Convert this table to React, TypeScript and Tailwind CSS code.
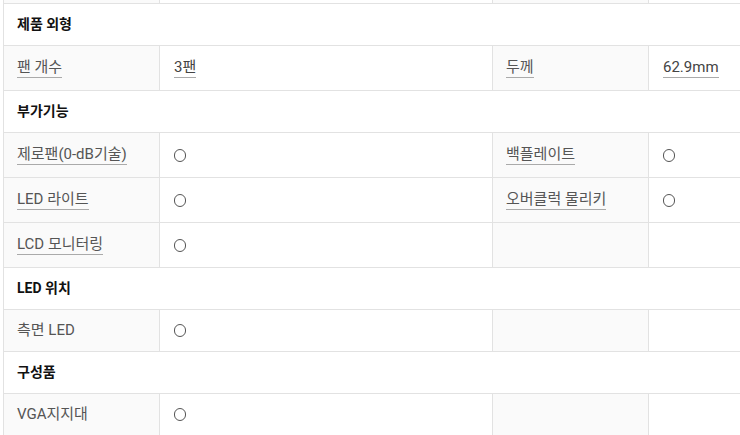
import React from "react";

type Cell = { label?: string; value?: string; circle?: boolean; underline?: boolean };
type Row =
  | { kind: "title"; text: string }
  | { kind: "data"; left: Cell; right: Cell; h: string };

const rows: Row[] = [
  { kind: "title", text: "제품 외형" },
  { kind: "data", h: "h-[45px]", left: { label: "팬 개수", value: "3팬", underline: true }, right: { label: "두께", value: "62.9mm", underline: true } },
  { kind: "title", text: "부가기능" },
  { kind: "data", h: "h-[45px]", left: { label: "제로팬(0-dB기술)", circle: true, underline: true }, right: { label: "백플레이트", circle: true, underline: true } },
  { kind: "data", h: "h-[45px]", left: { label: "LED 라이트", circle: true, underline: true }, right: { label: "오버클럭 물리키", circle: true, underline: true } },
  { kind: "data", h: "h-[45px]", left: { label: "LCD 모니터링", circle: true, underline: true }, right: {} },
  { kind: "title", text: "LED 위치" },
  { kind: "data", h: "h-[42px]", left: { label: "측면 LED", circle: true }, right: {} },
  { kind: "title", text: "구성품" },
  { kind: "data", h: "h-[42px]", left: { label: "VGA지지대", circle: true }, right: {} },
];

function Circle() {
  return <span className="inline-block w-[12px] h-[13px] rounded-full border-[1.5px] border-[#555]" />;
}

function Label({ cell }: { cell: Cell }) {
  return (
    <div className="bg-[#fafafa] flex items-center pl-[13px] border-l border-[#e2e2e2] first:border-l-0 text-[15px]">
      {cell.label && (
        <span className={cell.underline ? "text-[#555] border-b border-[#aaa] leading-[19px]" : "text-[#555] leading-[19px]"}>
          {cell.label}
        </span>
      )}
    </div>
  );
}

function Value({ cell }: { cell: Cell }) {
  return (
    <div className="bg-white flex items-center pl-[14px] border-l border-[#e2e2e2] text-[15px]">
      {cell.circle && <Circle />}
      {cell.value && (
        <span className={cell.underline ? "text-[#444] border-b border-[#aaa] leading-[19px]" : "text-[#444] leading-[19px]"}>
          {cell.value}
        </span>
      )}
    </div>
  );
}

export default function App() {
  return (
    <div
      className="w-[740px] h-[435px] overflow-hidden bg-white text-[14px]"
      style={{ fontFamily: 'Roboto, "Noto Sans CJK KR", sans-serif' }}
    >
      <div className="ml-[3px] w-[1000px] border-l border-[#e2e2e2]">
        <div className="grid grid-cols-[155px_333px_156px_1fr] h-[3px]">
          <div className="bg-[#fafafa]" />
          <div className="border-l border-[#e2e2e2]" />
          <div className="border-l border-[#e2e2e2] bg-[#fafafa]" />
          <div className="border-l border-[#e2e2e2]" />
        </div>
        {rows.map((r, i) =>
          r.kind === "title" ? (
            <div key={i} className="h-[42px] border-t border-[#e2e2e2] flex items-center pl-[13px] font-bold text-[#111]">
              {r.text}
            </div>
          ) : (
            <div key={i} className={`grid grid-cols-[155px_333px_156px_1fr] border-t border-[#e2e2e2] ${r.h}`}>
              <Label cell={r.left} />
              <Value cell={r.left} />
              <Label cell={r.right} />
              <Value cell={r.right} />
            </div>
          )
        )}
      </div>
    </div>
  );
}
